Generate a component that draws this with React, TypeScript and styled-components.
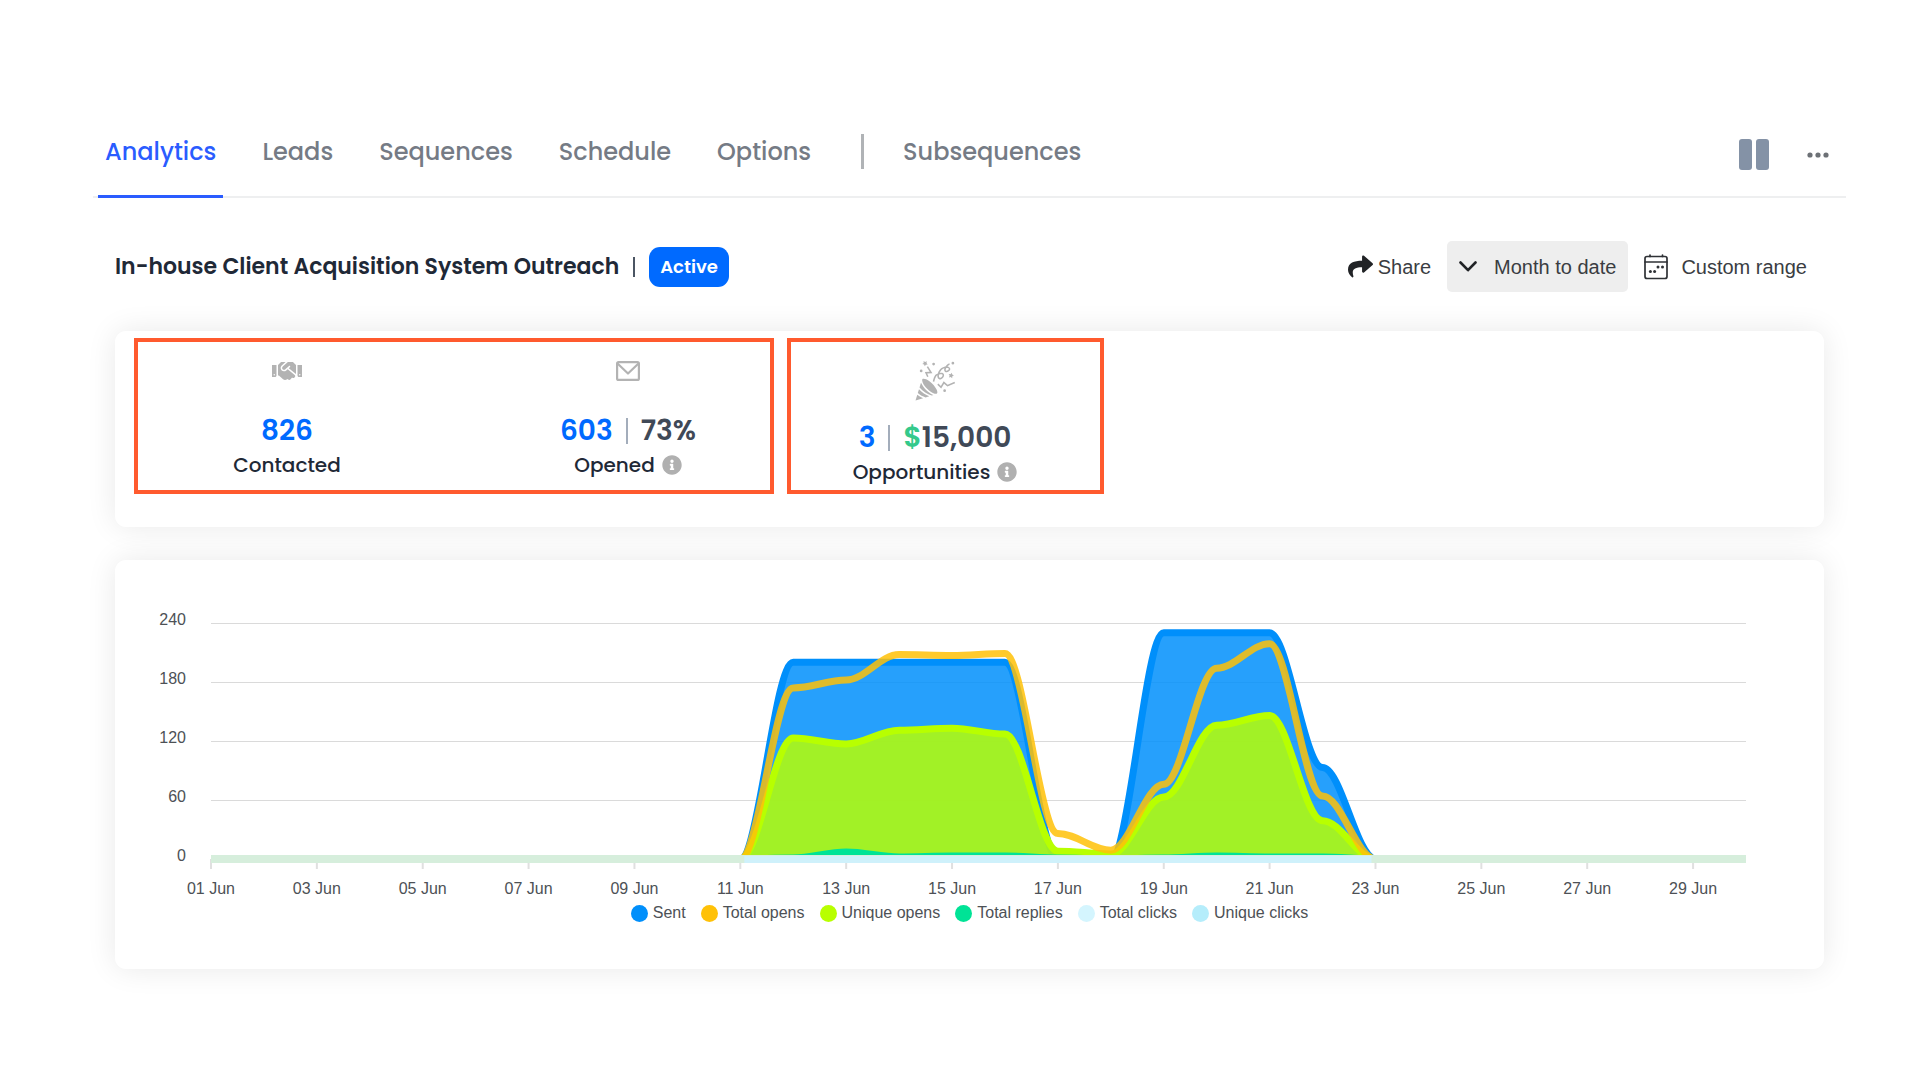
import React from "react";
import styled, { createGlobalStyle } from "styled-components";
import { FaHandshake, FaShare, FaInfoCircle } from "react-icons/fa";
import { GiPartyPopper } from "react-icons/gi";

const display = `Poppins, Inter, "Open Sans", sans-serif`;
const body = `"Liberation Sans", Arial, sans-serif`;

const GlobalStyle = createGlobalStyle`
  *, *::before, *::after { box-sizing: border-box; }
  body { margin: 0; background: #fff; color: #1f2937; font-family: ${display}; }
  button { font: inherit; color: inherit; background: none; border: 0; padding: 0; cursor: pointer; }
  h1, p { margin: 0; }
  svg { display: block; flex: none; }
`;

const Page = styled.div`
  padding: 110px 74px 110px 93px;
`;

const NavBar = styled.nav`
  display: flex;
  align-items: stretch;
  justify-content: space-between;
  height: 88px;
  padding: 0 17px 0 5px;
  border-bottom: 2px solid #eeeff0;
`;

const Tabs = styled.div`
  display: flex;
  gap: 32px;
`;

const Tab = styled.button<{ $active?: boolean }>`
  height: 88px;
  padding: 0 7px 2px;
  font-size: 24px;
  font-weight: 500;
  line-height: 32px;
  color: ${(p) => (p.$active ? "#2a5cff" : "#757b85")};
  border-bottom: 3px solid ${(p) => (p.$active ? "#2a5cff" : "transparent")};
`;

const TabDivider = styled.span`
  width: 3px;
  height: 35px;
  margin: 24px 0 0 11px;
  background: #b0b3b6;
`;

const NavActions = styled.div`
  display: flex;
  align-items: center;
  gap: 38px;
  padding-top: 3px;
`;

const Content = styled.main`
  padding: 43px 22px 0;
`;

const TitleRow = styled.header`
  display: flex;
  align-items: center;
  justify-content: space-between;
  height: 51px;
`;

const TitleGroup = styled.div`
  display: flex;
  align-items: center;
`;

const Title = styled.h1`
  font-size: 22px;
  font-weight: 600;
  line-height: 32px;
`;

const TitleBar = styled.span`
  width: 2px;
  height: 20px;
  margin: 0 14px;
  background: #4b5563;
`;

const Badge = styled.span`
  padding: 0 11px;
  border-radius: 11px;
  background: #006aff;
  color: #fff;
  font-size: 18px;
  font-weight: 600;
  line-height: 40px;
`;

const Controls = styled.div`
  display: flex;
  align-items: center;
  padding-right: 17px;
  font-family: ${body};
  font-size: 20px;
  line-height: 28px;
  color: #3a3d42;
`;

const Control = styled.button<{ $filled?: boolean; $gap: number }>`
  display: flex;
  align-items: center;
  gap: ${(p) => p.$gap}px;
  height: 51px;
  padding: ${(p) => (p.$filled ? "0 12px" : "0 16px")};
  border-radius: 5px;
  background: ${(p) => (p.$filled ? "#eeeeee" : "transparent")};
  &:last-child { padding-right: 0; }
`;

const Card = styled.section`
  border-radius: 11px;
  background: #fff;
  box-shadow: 0 0 30px rgba(0, 0, 0, 0.09);
`;

const StatsCard = styled(Card)`
  display: flex;
  gap: 13px;
  margin-top: 39px;
  padding: 7px 19px 33px;
`;

const Highlight = styled.div<{ $basis: number; $inset: number }>`
  display: flex;
  flex: 0 1 ${(p) => p.$basis}px;
  gap: 65px;
  height: 156px;
  padding: 16px 0 0 ${(p) => p.$inset}px;
  border: 4px solid #ff5a2e;
`;

const Stat = styled.div`
  display: flex;
  flex: 0 1 276px;
  flex-direction: column;
  align-items: center;
`;

const StatIcon = styled.div<{ $large?: boolean }>`
  display: flex;
  align-items: center;
  height: ${(p) => (p.$large ? 62 : 55)}px;
  padding-bottom: ${(p) => (p.$large ? 16 : 29)}px;
  color: #b3b3b3;
`;

const Figures = styled.p`
  display: flex;
  align-items: center;
  font-size: 28px;
  font-weight: 600;
  line-height: 36px;
  color: #404957;
`;

const Blue = styled.span`
  color: #006aff;
`;

const Green = styled.span`
  color: #34c98b;
`;

const FigureBar = styled.span`
  width: 2px;
  height: 26px;
  margin: 0 13px;
  background: #a3adbb;
`;

const StatLabel = styled.p`
  display: flex;
  align-items: center;
  gap: 7px;
  font-size: 20px;
  font-weight: 500;
  line-height: 32px;
  svg { color: #b0b0b0; }
`;

const ChartCard = styled(Card)`
  margin-top: 33px;
  padding-bottom: 44px;
`;

const ChartSvg = styled.svg`
  width: 100%;
  height: auto;
  text {
    font-family: ${body};
    font-size: 16px;
    fill: #4d5156;
  }
`;

const Legend = styled.ul`
  display: flex;
  justify-content: center;
  gap: 15px;
  margin: 0;
  padding: 0;
  list-style: none;
  font-family: ${body};
  font-size: 16px;
  line-height: 24px;
  color: #4d5156;
`;

const LegendItem = styled.li<{ $color: string }>`
  display: flex;
  align-items: center;
  gap: 5px;
  &::before {
    content: "";
    width: 17px;
    height: 17px;
    border-radius: 50%;
    background: ${(p) => p.$color};
  }
`;

const plot = { left: 96, right: 1631, top: 63, bottom: 299, width: 1709, height: 341 };
const dayX = (day: number) => plot.left + ((day - 1) * (plot.right - plot.left)) / 29;
const valueY = (v: number) => plot.bottom - (v * (plot.bottom - plot.top)) / 240;

const FIRST_DAY = 11;
const sent = [0, 200, 200, 200, 200, 200, 0, 0, 230, 230, 230, 93, 0];
const totalOpens = [0, 174, 182, 208, 207, 209, 26, 9, 76, 194, 219, 64, 0];
const uniqueOpens = [0, 123, 117, 131, 133, 127, 8, 5, 63, 136, 146, 39, 0];
const totalReplies = [0, 1, 7, 2, 3, 3, 1, 0, 1, 3, 2, 2, 0];

function curve(values: number[]) {
  return values
    .map((v, i) => {
      const x = dayX(FIRST_DAY + i);
      const y = valueY(v);
      if (i === 0) return `M${x},${y}`;
      const px = dayX(FIRST_DAY + i - 1);
      const k = (x - px) * 0.35;
      return `C${px + k},${valueY(values[i - 1])} ${x - k},${y} ${x},${y}`;
    })
    .join(" ");
}

const legend = [
  { label: "Sent", color: "#008ffb" },
  { label: "Total opens", color: "#ffc107" },
  { label: "Unique opens", color: "#b8ff00" },
  { label: "Total replies", color: "#00e396" },
  { label: "Total clicks", color: "#d4f5fe" },
  { label: "Unique clicks", color: "#b5edfb" },
];

function Area({ values, color }: { values: number[]; color: string }) {
  const d = curve(values);
  return (
    <g>
      <path d={`${d} Z`} fill={color} fillOpacity={0.85} />
      <path d={d} fill="none" stroke={color} strokeWidth={7} />
    </g>
  );
}

function Chart() {
  const ticks = Array.from({ length: 15 }, (_, i) => 1 + i * 2);
  return (
    <ChartSvg viewBox={`0 0 ${plot.width} ${plot.height}`} role="img" aria-label="Campaign activity in June">
      <defs>
        <clipPath id="plot-area">
          <rect x={plot.left} y={0} width={plot.right - plot.left} height={plot.bottom - 3} />
        </clipPath>
      </defs>
      {[240, 180, 120, 60, 0].map((v) => (
        <g key={v}>
          <line
            x1={plot.left}
            x2={plot.right}
            y1={Math.round(valueY(v)) + 0.5}
            y2={Math.round(valueY(v)) + 0.5}
            stroke="#dadada"
          />
          <text x={71} y={valueY(v) + 2} textAnchor="end">{v}</text>
        </g>
      ))}
      {ticks.map((d) => (
        <g key={d}>
          <line x1={dayX(d)} x2={dayX(d)} y1={plot.bottom} y2={plot.bottom + 10} stroke="#e0e0e0" strokeWidth={2} />
          <text x={dayX(d)} y={334} textAnchor="middle">{`${String(d).padStart(2, "0")} Jun`}</text>
        </g>
      ))}
      <g clipPath="url(#plot-area)">
        <Area values={sent} color="#008ffb" />
        <Area values={uniqueOpens} color="#b8ff00" />
        <path d={`${curve(totalReplies)} Z`} fill="#00e396" stroke="#00e396" strokeWidth={7} />
        <path d={curve(totalOpens)} fill="none" stroke="#ffc107" strokeOpacity={0.85} strokeWidth={7} />
      </g>
      <rect x={plot.left} y={plot.bottom - 4} width={plot.right - plot.left} height={8} fill="#d6eedc" />
      <rect x={dayX(11) + 4} y={plot.bottom - 3} width={dayX(23) - dayX(11) - 8} height={7} fill="#cff1fb" />
    </ChartSvg>
  );
}

const PauseIcon = () => (
  <svg width="30" height="31" viewBox="0 0 30 31" fill="#8492a6">
    <rect width="13" height="31" rx="3" />
    <rect x="17" width="13" height="31" rx="3" />
  </svg>
);

const DotsIcon = () => (
  <svg width="22" height="6" viewBox="0 0 22 6" fill="#6d7176">
    <circle cx="3" cy="3" r="2.6" />
    <circle cx="11" cy="3" r="2.6" />
    <circle cx="19" cy="3" r="2.6" />
  </svg>
);

const ChevronIcon = () => (
  <svg width="18" height="11" viewBox="0 0 18 11" fill="none" stroke="#212326" strokeWidth="2.6" strokeLinecap="round" strokeLinejoin="round">
    <path d="M1.5 1.5 9 9.2l7.5-7.7" />
  </svg>
);

const CalendarIcon = () => (
  <svg width="24" height="26" viewBox="0 0 24 26" fill="none" stroke="#2f3236" strokeWidth="1.7" strokeLinecap="round">
    <rect x="1" y="2.5" width="22" height="22" rx="2" />
    <path d="M1 8h22M6 1v1.5M18.5 1v1.5" />
    <g fill="#2f3236" stroke="none">
      <circle cx="14" cy="13" r="1.5" />
      <circle cx="18.5" cy="13" r="1.5" />
      <circle cx="6.4" cy="17.5" r="1.5" />
      <circle cx="10.6" cy="17.5" r="1.5" />
    </g>
  </svg>
);

const MailIcon = () => (
  <svg width="24" height="20" viewBox="0 0 24 20" fill="none" stroke="currentColor" strokeWidth="2.2" strokeLinejoin="round">
    <rect x="1.1" y="1.1" width="21.8" height="17.8" rx="1.5" />
    <path d="M1.5 2.5 12 12.5 22.5 2.5" />
  </svg>
);

export default function App() {
  return (
    <>
      <GlobalStyle />
      <Page>
        <NavBar>
          <Tabs>
            <Tab $active>Analytics</Tab>
            <Tab>Leads</Tab>
            <Tab>Sequences</Tab>
            <Tab>Schedule</Tab>
            <Tab>Options</Tab>
            <TabDivider />
            <Tab>Subsequences</Tab>
          </Tabs>
          <NavActions>
            <button aria-label="Pause campaign"><PauseIcon /></button>
            <button aria-label="More actions"><DotsIcon /></button>
          </NavActions>
        </NavBar>
        <Content>
          <TitleRow>
            <TitleGroup>
              <Title>In-house Client Acquisition System Outreach</Title>
              <TitleBar />
              <Badge>Active</Badge>
            </TitleGroup>
            <Controls>
              <Control $gap={5}><FaShare size={25} color="#212326" />Share</Control>
              <Control $filled $gap={17}><ChevronIcon />Month to date</Control>
              <Control $gap={13}><CalendarIcon />Custom range</Control>
            </Controls>
          </TitleRow>
          <StatsCard>
            <Highlight $basis={640} $inset={11}>
              <Stat>
                <StatIcon><FaHandshake size={30} /></StatIcon>
                <Figures><Blue>826</Blue></Figures>
                <StatLabel>Contacted</StatLabel>
              </Stat>
              <Stat>
                <StatIcon><MailIcon /></StatIcon>
                <Figures><Blue>603</Blue><FigureBar />73%</Figures>
                <StatLabel>Opened<FaInfoCircle size={20} /></StatLabel>
              </Stat>
            </Highlight>
            <Highlight $basis={317} $inset={6}>
              <Stat>
                <StatIcon $large><GiPartyPopper size={44} /></StatIcon>
                <Figures><Blue>3</Blue><FigureBar /><Green>$</Green>15,000</Figures>
                <StatLabel>Opportunities<FaInfoCircle size={20} /></StatLabel>
              </Stat>
            </Highlight>
          </StatsCard>
          <ChartCard>
            <Chart />
            <Legend>
              {legend.map((item) => (
                <LegendItem key={item.label} $color={item.color}>{item.label}</LegendItem>
              ))}
            </Legend>
          </ChartCard>
        </Content>
      </Page>
    </>
  );
}
